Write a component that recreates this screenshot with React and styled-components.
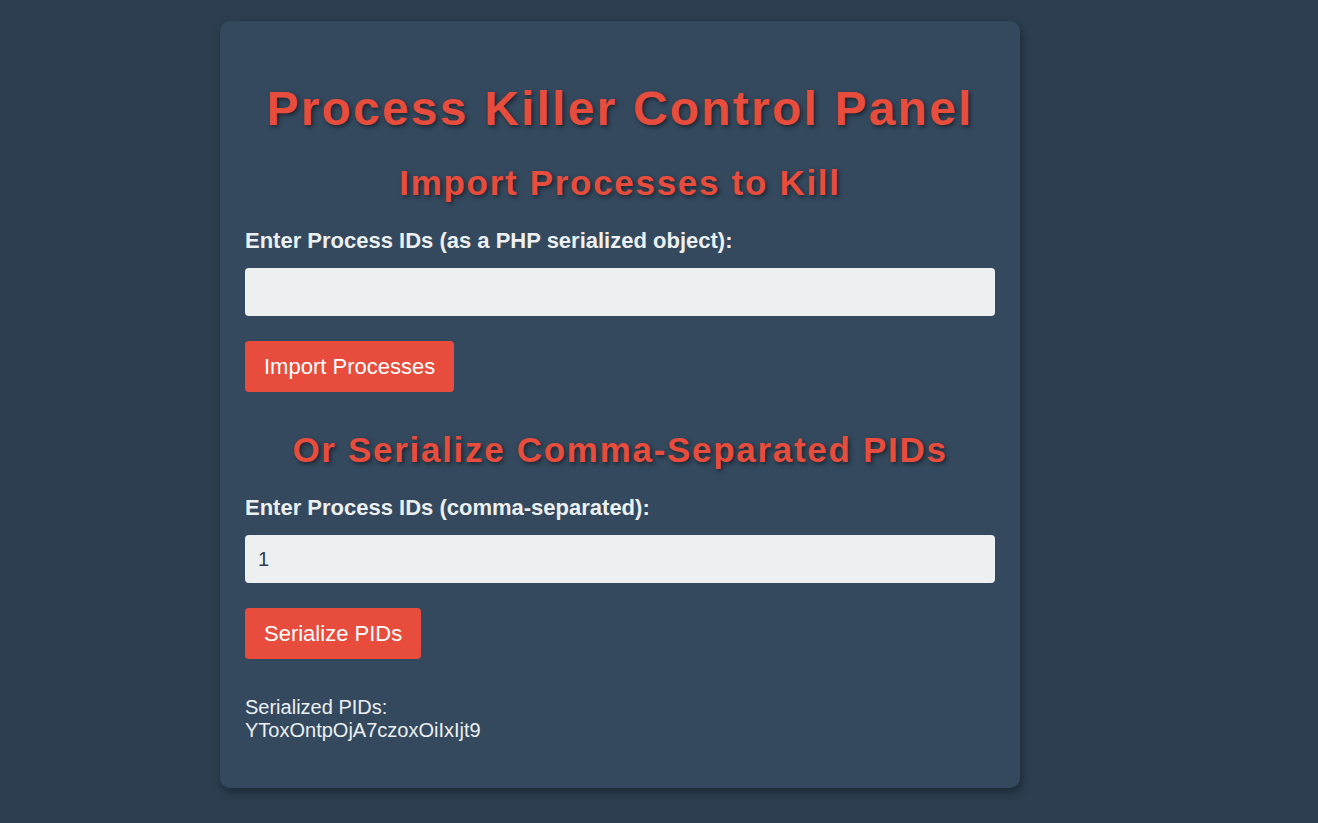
import styled, { createGlobalStyle } from "styled-components";

const GlobalStyle = createGlobalStyle`
  body {
    margin: 0;
    background: #2c3e50;
    font-family: "Liberation Sans", Arial, sans-serif;
    color: #ecf0f1;
  }
`;

const Page = styled.div`
  padding: 21px 0 35px 220px;
`;

const Card = styled.div`
  width: 800px;
  box-sizing: border-box;
  background: #34495e;
  border-radius: 10px;
  padding: 60px 25px 46px;
  box-shadow: 2px 4px 10px rgba(0, 0, 0, 0.35);
`;

const Title = styled.h1`
  margin: 0 0 27px;
  text-align: center;
  color: #e74c3c;
  font-size: 48px;
  line-height: normal;
  letter-spacing: 2.2px;
  text-shadow: 2px 2px 4px rgba(0, 0, 0, 0.5);
`;

const Heading = styled.h2`
  margin: ${p => p.$top || 0}px 0 25px;
  text-align: center;
  color: #e74c3c;
  font-size: 35px;
  line-height: normal;
  letter-spacing: 1.7px;
  text-shadow: 2px 2px 4px rgba(0, 0, 0, 0.5);
`;

const Label = styled.label`
  display: block;
  font-weight: bold;
  font-size: 22px;
  line-height: normal;
  margin-bottom: 14px;
`;

const Input = styled.input`
  display: block;
  width: 100%;
  box-sizing: border-box;
  height: 48px;
  padding: 0 13px;
  border: none;
  border-radius: 4px;
  background: #ecf0f1;
  color: #2c3e50;
  font-family: inherit;
  font-size: 20px;
  margin-bottom: 25px;
  outline: none;
`;

const Button = styled.button`
  display: block;
  height: 51px;
  padding: 0 19px;
  border: none;
  border-radius: 4px;
  background: #e74c3c;
  color: #fff;
  font-family: inherit;
  font-size: 22px;
  cursor: pointer;
`;

const Result = styled.div`
  margin-top: 37px;
  font-size: 20px;
  line-height: 23px;
`;

export default function App() {
  return (
    <>
      <GlobalStyle />
      <Page>
        <Card>
          <Title>Process Killer Control Panel</Title>
          <Heading>Import Processes to Kill</Heading>
          <Label>Enter Process IDs (as a PHP serialized object):</Label>
          <Input type="text" defaultValue="" />
          <Button>Import Processes</Button>
          <Heading $top={38}>Or Serialize Comma-Separated PIDs</Heading>
          <Label>Enter Process IDs (comma-separated):</Label>
          <Input type="text" defaultValue="1" />
          <Button>Serialize PIDs</Button>
          <Result>
            Serialized PIDs:
            <br />
            YToxOntpOjA7czoxOiIxIjt9
          </Result>
        </Card>
      </Page>
    </>
  );
}
